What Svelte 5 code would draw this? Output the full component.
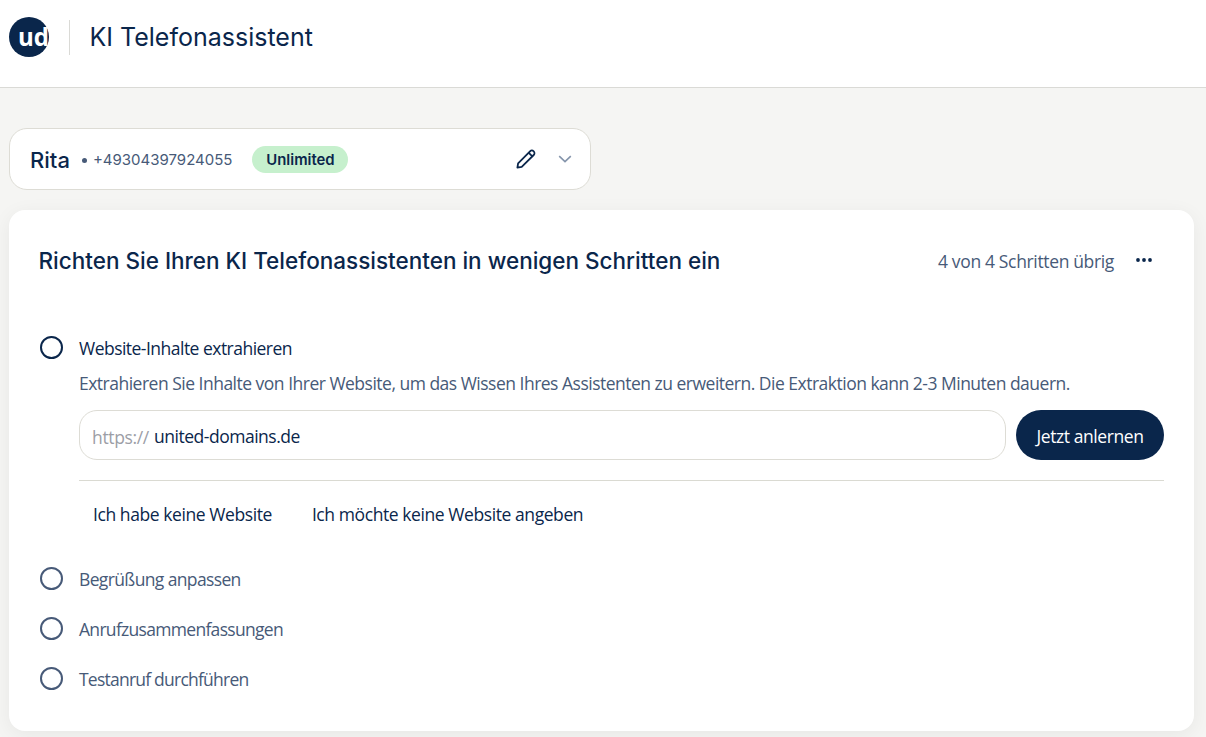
<script lang="ts">
	const assistant = {
		name: 'Rita',
		phone: '+49304397924055',
		plan: 'Unlimited',
	};

	const steps = [
		{ label: 'Begrüßung anpassen', tracking: -0.63 },
		{ label: 'Anrufzusammenfassungen', tracking: -0.7 },
		{ label: 'Testanruf durchführen', tracking: -0.77 },
	];

	let website = $state('united-domains.de');
</script>

<header class="topbar">
	<svg class="logo" width="40" height="40" viewBox="0 0 40 40">
		<circle cx="20" cy="20" r="20" fill="#0a264b" />
		<text x="9" y="28.8" textLength="31" lengthAdjust="spacingAndGlyphs">ud</text>
	</svg>
	<div class="divider"></div>
	<h1>KI Telefonassistent</h1>
</header>

<main>
	<section class="assistant">
		<span class="name">{assistant.name}</span>
		<span class="dot"></span>
		<span class="phone">{assistant.phone}</span>
		<span class="badge">{assistant.plan}</span>
		<button class="edit" aria-label="Bearbeiten">
			<svg width="20" height="20" viewBox="0 0 20 20" fill="none" stroke="#0a264b" stroke-width="1.8" stroke-linejoin="round">
				<path d="M1.4 18.6 2.1 14.3 14 2.3a2.55 2.55 0 0 1 3.7 3.7L5.7 17.9 1.4 18.6Z" />
				<path d="m12.6 3.7 3.7 3.7" />
			</svg>
		</button>
		<svg class="chevron" width="14" height="8" viewBox="0 0 14 8" fill="none" stroke="#8494ab" stroke-width="1.6">
			<path d="m1.2 1.2 5.8 5.4 5.8-5.4" />
		</svg>
	</section>

	<section class="setup">
		<div class="setup-head">
			<h2>Richten Sie Ihren KI Telefonassistenten in wenigen Schritten ein</h2>
			<span class="remaining">4 von 4 Schritten übrig</span>
			<svg class="more" width="16" height="4" viewBox="0 0 16 4" fill="#0a264b">
				<circle cx="2" cy="2" r="1.9" />
				<circle cx="8" cy="2" r="1.9" />
				<circle cx="14" cy="2" r="1.9" />
			</svg>
		</div>

		<div class="step active">
			<span class="ring"></span>
			<div class="step-body">
				<h3>Website-Inhalte extrahieren</h3>
				<p>Extrahieren Sie Inhalte von Ihrer Website, um das Wissen Ihres Assistenten zu erweitern. Die Extraktion kann 2-3 Minuten dauern.</p>
				<div class="form">
					<label class="field">
						<span class="prefix">https://</span>
						<input type="text" bind:value={website} />
					</label>
					<button class="submit">Jetzt anlernen</button>
				</div>
				<div class="links">
					<button>Ich habe keine Website</button>
					<button>Ich möchte keine Website angeben</button>
				</div>
			</div>
		</div>

		{#each steps as step}
			<div class="step">
				<span class="ring"></span>
				<span style="letter-spacing: {step.tracking}px">{step.label}</span>
			</div>
		{/each}
	</section>
</main>

<style>
	:global(body) {
		background: #f5f5f3;
		color: #0a264b;
		font-family: 'Open Sans', 'Noto Sans', sans-serif;
		font-size: 17.5px;
		overflow: hidden;
	}

	:global(#app) {
		height: 737px;
		overflow: hidden;
	}

	h1,
	h2,
	h3,
	p {
		margin: 0;
		font-size: inherit;
		font-weight: 400;
		white-space: nowrap;
	}

	button {
		border: 0;
		padding: 0;
		background: none;
		color: inherit;
		font: inherit;
		letter-spacing: -0.42px;
		white-space: nowrap;
	}

	svg {
		display: block;
		flex: none;
	}

	.topbar {
		box-sizing: border-box;
		height: 88px;
		padding: 17px 9px 0;
		display: flex;
		align-items: flex-start;
		background: #fff;
		border-bottom: 1px solid #dadad6;
	}

	.logo text {
		fill: #fff;
		font-size: 25px;
		font-weight: 700;
	}

	.divider {
		width: 1px;
		height: 35px;
		margin: 3px 19.5px 0 20px;
		background: #dadad6;
	}

	h1 {
		font-family: Inter, sans-serif;
		font-size: 25px;
		line-height: 40px;
	}

	main {
		padding: 40px 12px 0 9px;
	}

	.assistant {
		box-sizing: border-box;
		width: 582px;
		height: 62px;
		padding: 0 19px 0 20px;
		display: flex;
		align-items: center;
		background: #fff;
		border: 1px solid #dddcd5;
		border-radius: 18px;
		font-family: Inter, sans-serif;
	}

	.name {
		padding-top: 1px;
		font-size: 22px;
		font-weight: 500;
	}

	.dot {
		width: 5px;
		height: 5px;
		margin: 2px 6px 0 12px;
		border-radius: 50%;
		background: #475a78;
	}

	.phone {
		color: #475a78;
		font-size: 15px;
	}

	.badge {
		width: 96px;
		height: 27px;
		margin-left: 20px;
		line-height: 28px;
		text-align: center;
		background: #c6f0cd;
		border-radius: 14px;
		font-size: 14.9px;
		font-weight: 600;
	}

	.edit {
		margin-left: auto;
	}

	.chevron {
		margin: 0 -1px 0 22px;
	}

	.setup {
		box-sizing: border-box;
		height: 521px;
		margin-top: 20px;
		padding: 30px;
		background: #fff;
		border-radius: 16px;
		box-shadow: 0 4px 20px rgba(0, 0, 0, 0.06);
	}

	.setup-head {
		height: 41px;
		padding-right: 12px;
		margin-bottom: 52px;
		display: flex;
		align-items: center;
	}

	h2 {
		margin-left: -0.5px;
		font-family: Inter, sans-serif;
		font-size: 22.5px;
		font-weight: 500;
	}

	.remaining {
		margin-left: auto;
		padding-top: 1px;
		color: #475a78;
		letter-spacing: -0.35px;
	}

	.more {
		margin: 0 0 2px 22px;
	}

	.step {
		height: 50px;
		display: flex;
		align-items: flex-start;
		gap: 16px;
		color: #475a78;
		line-height: 30px;
	}

	.step.active {
		height: 231px;
		color: #0a264b;
	}

	.ring {
		box-sizing: border-box;
		flex: none;
		width: 23px;
		height: 23px;
		margin: 3px 0 0 1px;
		border: 2px solid currentColor;
		border-radius: 50%;
	}

	.step-body {
		flex: 1;
		min-width: 0;
	}

	h3 {
		letter-spacing: -0.52px;
	}

	p {
		margin-top: 5px;
		color: #475a78;
		letter-spacing: -0.505px;
	}

	.form {
		display: flex;
		gap: 10px;
		margin-top: 12px;
	}

	.field {
		box-sizing: border-box;
		flex: 1;
		height: 50px;
		padding: 1px 12px 0;
		display: flex;
		align-items: center;
		border: 1px solid #dddcd5;
		border-radius: 18px;
	}

	.prefix {
		width: 62px;
		padding-top: 3px;
		color: #9c9ea6;
		letter-spacing: -0.35px;
	}

	input {
		flex: 1;
		min-width: 0;
		border: 0;
		padding: 0;
		outline: 0;
		background: none;
		color: inherit;
		font: inherit;
		letter-spacing: -0.48px;
	}

	.submit {
		width: 148px;
		height: 50px;
		padding-top: 1px;
		border-radius: 25px;
		background: #0a264b;
		color: #fff;
	}

	.links {
		display: flex;
		gap: 40px;
		margin-top: 20px;
		padding: 18px 14px 0;
		border-top: 1px solid #dadad2;
		line-height: 30px;
	}
</style>
